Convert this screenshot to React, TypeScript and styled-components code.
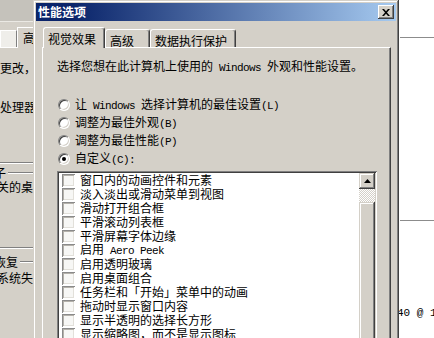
import React from "react";
import styled, { createGlobalStyle } from "styled-components";

const FACE = "#d4d0c8";
const CJK = `"Noto Sans CJK SC", "Liberation Sans", sans-serif`;

const GlobalStyle = createGlobalStyle`
  html, body { margin: 0; padding: 0; background: #fff; }
  body { font-family: ${CJK}; }
`;

const Desktop = styled.div`
  position: relative;
  width: 434px;
  height: 338px;
  overflow: hidden;
  background: #fff;
  font-family: ${CJK};
  font-size: 12px;
  line-height: 14px;
  color: #000;
`;

const Latin = styled.span`
  font-family: "Liberation Mono", monospace;
  font-size: 11px;
  letter-spacing: -0.6px;
  white-space: pre;
`;

/* ---------- window behind, on the left ---------- */
const BackWindow = styled.div`
  position: absolute;
  left: 0;
  top: 0;
  width: 60px;
  height: 338px;
  background: ${FACE};
  display: flex;
  flex-direction: column;
  overflow: hidden;
  z-index: 0;
`;

const BackTitle = styled.div`
  flex: none;
  height: 21px;
  background: #c5c2bb;
  border-bottom: 1px solid #ebe9e4;
`;

const BackTabs = styled.div`
  flex: none;
  height: 25px;
  display: flex;
  align-items: flex-end;
`;

const BackTab = styled.div<{ $active?: boolean; $w: number }>`
  box-sizing: border-box;
  flex: none;
  width: ${(p) => p.$w}px;
  height: ${(p) => (p.$active ? 21 : 17)}px;
  margin-bottom: ${(p) => (p.$active ? -1 : 0)}px;
  padding: 3px 0 0 5px;
  background: ${(p) => (p.$active ? FACE : "#efeeea")};
  border-top: 1px solid #fff;
  border-left: 1px solid #fff;
  border-right: 1px solid #808080;
  position: relative;
  z-index: ${(p) => (p.$active ? 1 : 0)};
  white-space: nowrap;
`;

const BackPanel = styled.div`
  flex: 1;
  display: flex;
  flex-direction: column;
  border-top: 1px solid #fff;
`;

const BackText = styled.div<{ $mt: number; $ml?: number }>`
  margin-top: ${(p) => p.$mt}px;
  margin-left: ${(p) => p.$ml ?? 0}px;
  height: 14px;
  white-space: nowrap;
`;

const BackRule = styled.div<{ $mt: number }>`
  margin-top: ${(p) => p.$mt}px;
  height: 0;
  border-top: 1px solid #808080;
  border-bottom: 1px solid #fff;
`;

const BackHeading = styled.div<{ $mt: number; $ml: number }>`
  margin-top: ${(p) => p.$mt}px;
  margin-left: ${(p) => p.$ml}px;
  height: 14px;
  display: flex;
  align-items: center;
  white-space: nowrap;
  &::after {
    content: "";
    flex: 1;
    margin-left: 2px;
    border-top: 1px solid #808080;
    border-bottom: 1px solid #fff;
  }
`;

/* ---------- window behind, on the right ---------- */
const SideWindow = styled.div`
  position: absolute;
  left: 399px;
  top: 0;
  width: 35px;
  height: 338px;
  background: #fff;
  display: flex;
  flex-direction: column;
  z-index: 0;
`;

const SideRule = styled.div<{ $mt: number }>`
  margin-top: ${(p) => p.$mt}px;
  margin-left: 1px;
  height: 1px;
  background: #8c8c8c;
`;

const SideText = styled.div`
  margin-top: 85px;
  margin-left: -2px;
  height: 14px;
  font-family: "Liberation Mono", monospace;
  font-size: 11px;
  white-space: pre;
`;

/* ---------- dialog ---------- */
const Dialog = styled.div`
  position: absolute;
  left: 33px;
  top: 0;
  width: 366px;
  height: 380px;
  box-sizing: border-box;
  padding: 3px;
  background: ${FACE};
  box-shadow: inset -1px -1px #404040, inset 1px 1px ${FACE},
    inset -2px -2px #808080, inset 2px 2px #fff;
  display: flex;
  flex-direction: column;
  z-index: 2;
`;

const TitleBar = styled.div`
  flex: none;
  height: 18px;
  display: flex;
  align-items: center;
  justify-content: space-between;
  padding: 0 2px;
  background: linear-gradient(to right, #0a246a 10%, #a6caf0);
`;

const Title = styled.span`
  color: #fff;
  font-weight: 700;
  font-size: 12px;
  line-height: 14px;
`;

const CloseButton = styled.div`
  width: 16px;
  height: 14px;
  box-sizing: border-box;
  background: ${FACE};
  box-shadow: inset -1px -1px #404040, inset 1px 1px #fff,
    inset -2px -2px #808080;
  display: flex;
  align-items: center;
  justify-content: center;
`;

const Body = styled.div`
  flex: 1;
  display: flex;
  flex-direction: column;
  padding: 6px 5px 0 6px;
`;

const TabRow = styled.div`
  flex: none;
  height: 20px;
  display: flex;
  align-items: flex-end;
  padding-left: 1px;
`;

const Tab = styled.div<{ $active?: boolean; $w: number }>`
  box-sizing: border-box;
  flex: none;
  width: ${(p) => p.$w}px;
  height: ${(p) => (p.$active ? 21 : 18)}px;
  margin-bottom: ${(p) => (p.$active ? -1 : 0)}px;
  padding: 4px 0 0 4px;
  background: ${FACE};
  border-top: 1px solid #fff;
  border-left: 1px solid #fff;
  border-right: 1px solid #404040;
  box-shadow: inset -1px 0 #808080;
  border-radius: 3px 3px 0 0;
  position: relative;
  z-index: ${(p) => (p.$active ? 1 : 0)};
  white-space: nowrap;
`;

const Panel = styled.div`
  flex: 1;
  display: flex;
  flex-direction: column;
  border-top: 1px solid #fff;
  border-left: 1px solid #fff;
  border-right: 1px solid #404040;
  box-shadow: inset -1px 0 #808080;
  padding: 11px 13px 0 14px;
`;

const Intro = styled.div`
  height: 14px;
  white-space: nowrap;
`;

const RadioGroup = styled.div`
  margin-top: 23px;
  display: flex;
  flex-direction: column;
`;

const RadioRow = styled.div`
  height: 18px;
  display: flex;
  align-items: center;
  gap: 5px;
  padding-left: 1px;
  white-space: nowrap;
`;

const Radio = styled.span<{ $checked?: boolean }>`
  flex: none;
  width: 12px;
  height: 12px;
  box-sizing: border-box;
  border-radius: 50%;
  border: 1px solid;
  border-color: #808080 #fff #fff #808080;
  background: #fff;
  box-shadow: inset 1px 1px #404040, inset -1px -1px ${FACE};
  display: flex;
  align-items: center;
  justify-content: center;
  &::after {
    content: "";
    width: 4px;
    height: 4px;
    border-radius: 50%;
    background: ${(p) => (p.$checked ? "#000" : "transparent")};
  }
`;

const ListBox = styled.div`
  flex: none;
  margin-top: 3px;
  height: 200px;
  box-sizing: border-box;
  padding: 2px;
  background: #fff;
  box-shadow: inset 1px 1px #808080, inset -1px -1px #fff,
    inset 2px 2px #404040, inset -2px -2px ${FACE};
  display: flex;
`;

const Items = styled.div`
  flex: 1;
  display: flex;
  flex-direction: column;
`;

const ItemRow = styled.div`
  height: 14px;
  flex: none;
  display: flex;
  align-items: center;
  padding-left: 3px;
  white-space: nowrap;
  overflow: hidden;
`;

const CheckBox = styled.span`
  flex: none;
  width: 13px;
  height: 13px;
  margin-right: 5px;
  box-sizing: border-box;
  background: #f7f7f5;
  box-shadow: inset 1px 1px #8a8a8a, inset -1px -1px #fff,
    inset 2px 2px #b4b1aa, inset -2px -2px #e2e0da;
`;

const ScrollBar = styled.div`
  flex: none;
  width: 16px;
  display: flex;
  flex-direction: column;
`;

const Raised = styled.div`
  box-sizing: border-box;
  background: ${FACE};
  box-shadow: inset -1px -1px #404040, inset 1px 1px ${FACE},
    inset -2px -2px #808080, inset 2px 2px #fff;
`;

const ScrollButton = styled(Raised)`
  flex: none;
  height: 16px;
  display: flex;
  align-items: center;
  justify-content: center;
`;

const ScrollTrack = styled.div`
  flex: none;
  height: 13px;
  background-color: #fff;
  background-image: repeating-conic-gradient(${FACE} 0 25%, #fff 0 50%);
  background-size: 2px 2px;
`;

const ScrollThumb = styled(Raised)`
  flex: 1;
`;

const items: React.ReactNode[] = [
  "窗口内的动画控件和元素",
  "淡入淡出或滑动菜单到视图",
  "滑动打开组合框",
  "平滑滚动列表框",
  "平滑屏幕字体边缘",
  <>
    启用<Latin> Aero Peek</Latin>
  </>,
  "启用透明玻璃",
  "启用桌面组合",
  "任务栏和「开始」菜单中的动画",
  "拖动时显示窗口内容",
  "显示半透明的选择长方形",
  "显示缩略图，而不是显示图标",
  "在窗口和按钮上使用视觉样式",
];

export default function App() {
  return (
    <Desktop>
      <GlobalStyle />

      <BackWindow>
        <BackTitle />
        <BackTabs>
          <BackTab $w={17} />
          <BackTab $active $w={43}>
            高级
          </BackTab>
        </BackTabs>
        <BackPanel>
          <BackText $mt={13}>更改，</BackText>
          <BackText $mt={25}>处理器计划</BackText>
          <BackRule $mt={48} />
          <BackHeading $mt={2} $ml={-6}>
            子
          </BackHeading>
          <BackText $mt={0} $ml={-3}>
            关的桌面
          </BackText>
          <BackRule $mt={53} />
          <BackHeading $mt={6} $ml={-6}>
            恢复
          </BackHeading>
          <BackText $mt={2} $ml={-3}>
            系统失败
          </BackText>
        </BackPanel>
      </BackWindow>

      <SideWindow>
        <SideRule $mt={37} />
        <SideRule $mt={182} />
        <SideText>40 @ 1</SideText>
      </SideWindow>

      <Dialog>
        <TitleBar>
          <Title>性能选项</Title>
          <CloseButton>
            <svg width="8" height="7" viewBox="0 0 8 7">
              <path
                d="M0 0h2l2 2.2L6 0h2L5 3.5 8 7H6L4 4.8 2 7H0l3-3.5z"
                fill="#000"
              />
            </svg>
          </CloseButton>
        </TitleBar>
        <Body>
          <TabRow>
            <Tab $active $w={62}>
              视觉效果
            </Tab>
            <Tab $w={45}>高级</Tab>
            <Tab $w={86}>数据执行保护</Tab>
          </TabRow>
          <Panel>
            <Intro>
              选择您想在此计算机上使用的<Latin> Windows </Latin>外观和性能设置。
            </Intro>
            <RadioGroup>
              <RadioRow>
                <Radio />
                <span>
                  让<Latin> Windows </Latin>选择计算机的最佳设置<Latin>(L)</Latin>
                </span>
              </RadioRow>
              <RadioRow>
                <Radio />
                <span>
                  调整为最佳外观<Latin>(B)</Latin>
                </span>
              </RadioRow>
              <RadioRow>
                <Radio />
                <span>
                  调整为最佳性能<Latin>(P)</Latin>
                </span>
              </RadioRow>
              <RadioRow>
                <Radio $checked />
                <span>
                  自定义<Latin>(C):</Latin>
                </span>
              </RadioRow>
            </RadioGroup>
            <ListBox>
              <Items>
                {items.map((label, i) => (
                  <ItemRow key={i}>
                    <CheckBox />
                    <span>{label}</span>
                  </ItemRow>
                ))}
              </Items>
              <ScrollBar>
                <ScrollButton>
                  <svg width="7" height="4" viewBox="0 0 7 4">
                    <path d="M3.5 0L7 4H0z" fill="#000" />
                  </svg>
                </ScrollButton>
                <ScrollTrack />
                <ScrollThumb />
              </ScrollBar>
            </ListBox>
          </Panel>
        </Body>
      </Dialog>
    </Desktop>
  );
}
